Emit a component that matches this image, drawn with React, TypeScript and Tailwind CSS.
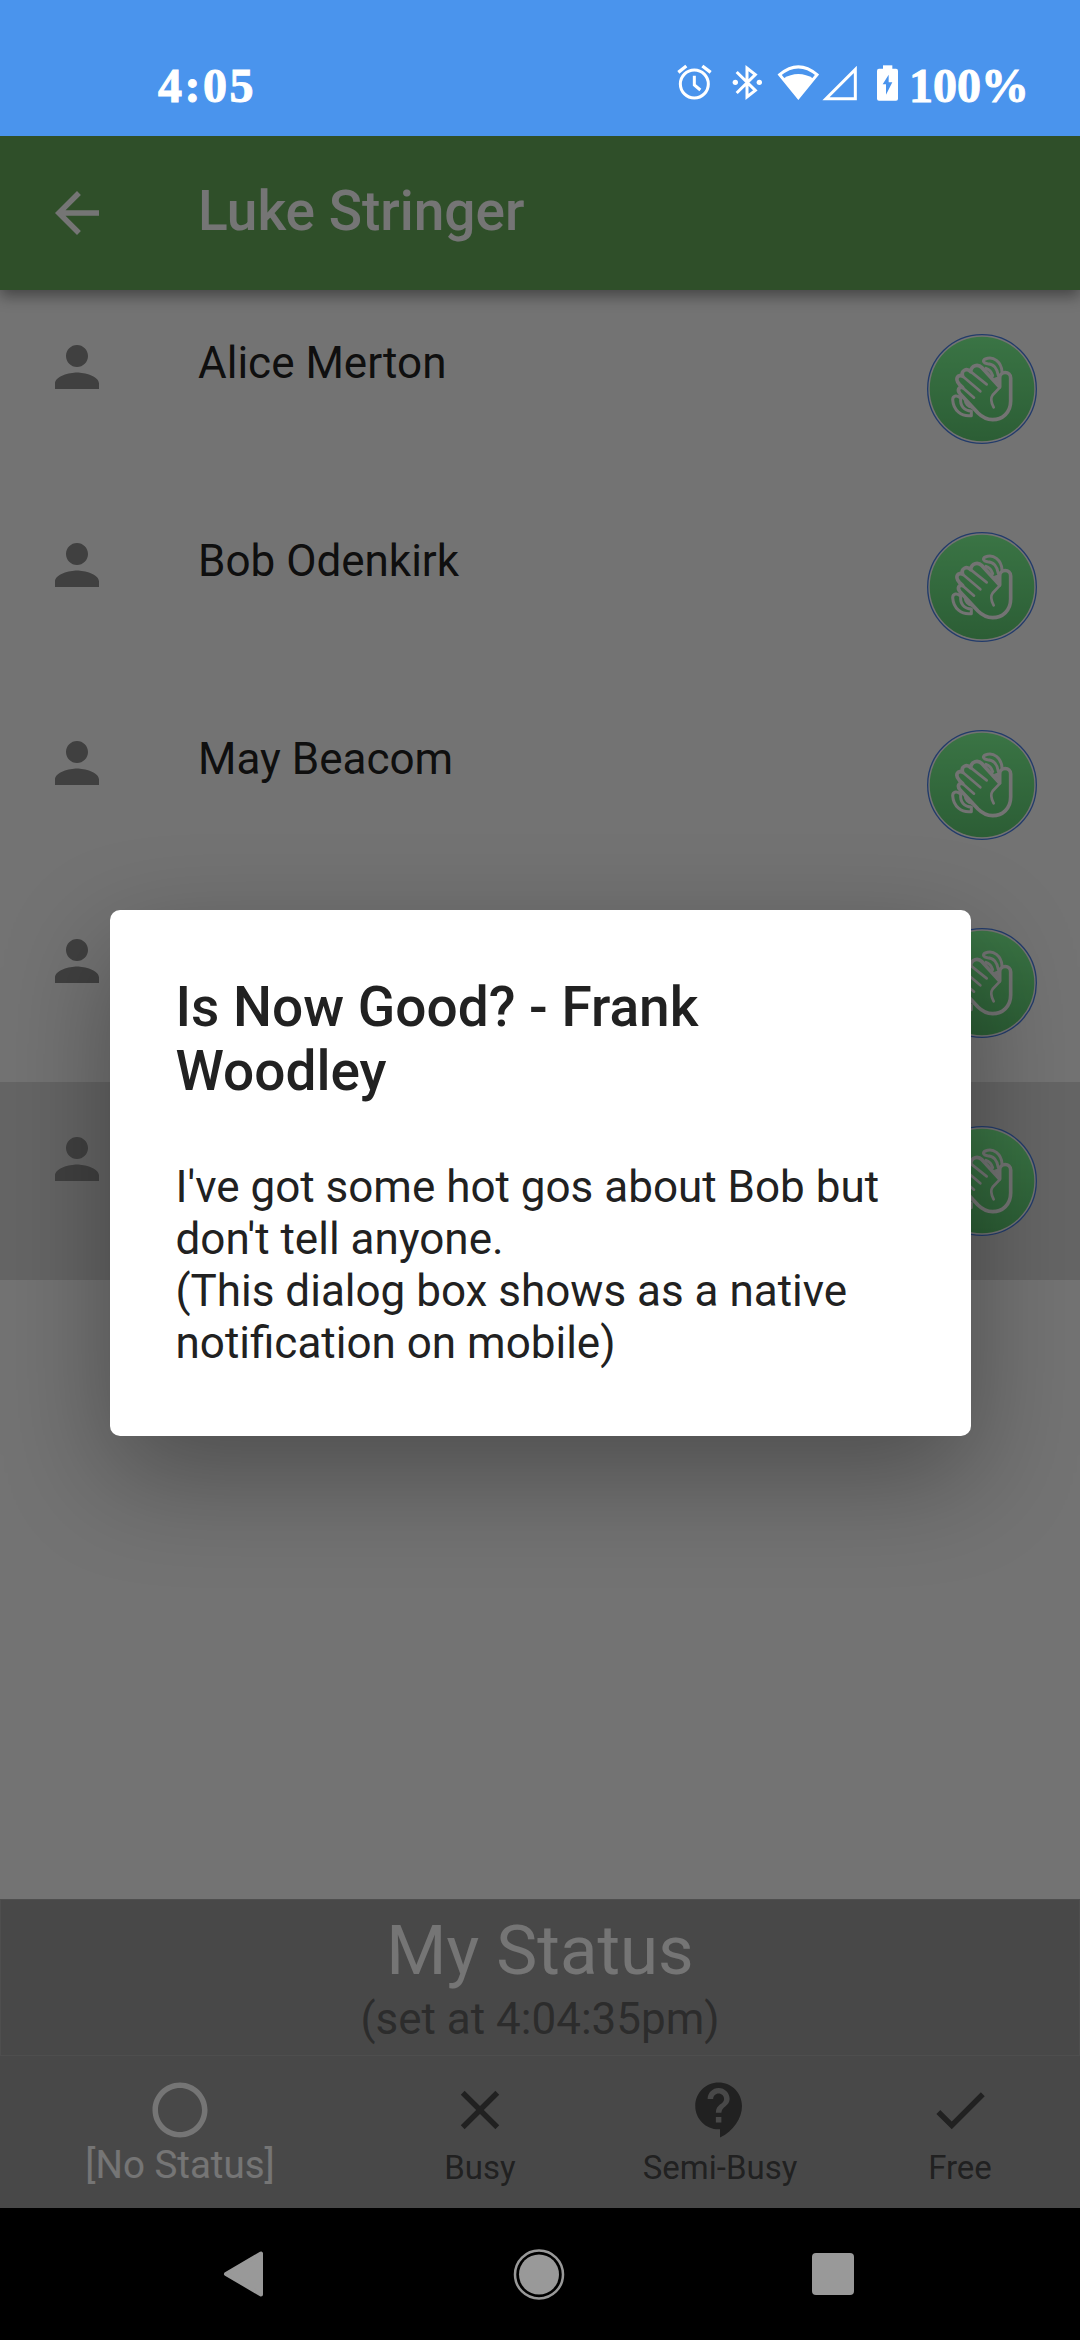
import {
  MdArrowBack, MdCheck, MdClear, MdContactSupport, MdPerson, MdRadioButtonUnchecked,
} from "react-icons/md";
import type { IconType } from "react-icons";

function StatusIcons() {
  return (
    <div className="mr-[10px] mt-[4px] flex items-start">
      <svg className="mr-[20px] h-[37px] w-[36px]" viewBox="108 72 108 111" fill="none" stroke="#fff">
        <circle cx="163" cy="132" r="42" strokeWidth="9" />
        <path d="M163 107V135L181 150" strokeWidth="9" />
        <path d="M115 97L139 78M187 78L212 97" strokeWidth="10" />
      </svg>
      <svg className="mr-[14px] h-[37px] w-[31px]" viewBox="276 72 93 111" fill="#fff">
        <path d="M290 96L346 151L321 171V84L346 104L290 159" fill="none" stroke="#fff" strokeWidth="9" />
        <circle cx="286" cy="127" r="8" />
        <circle cx="358" cy="127" r="8" />
      </svg>
      <svg className="mr-[2px] h-[37px] w-[43px]" viewBox="412 72 129 111" fill="none">
        <path d="M420 104Q476 57 532 104L476 173Z" stroke="#fff" strokeWidth="9" />
        <path d="M430 116Q476 88 522 116L476 178Z" fill="#fff" />
      </svg>
      <svg className="mr-[17px] h-[37px] w-[37px]" viewBox="546 72 111 111" fill="none">
        <path d="M558 176H646V88Z" stroke="#fff" strokeWidth="9" />
      </svg>
      <svg className="h-[38px] w-[23px]" viewBox="708 72 69 114" fill="#fff">
        <rect x="711" y="86" width="63" height="96" rx="6" />
        <rect x="729" y="76" width="28" height="14" />
        <path d="M746 104L728 133H738V164L757 127H746Z" fill="#4a94ed" />
      </svg>
    </div>
  );
}

function WaveButton() {
  return (
    <svg className="h-[112px] w-[112px] shrink-0" viewBox="78 68 336 336" fill="none">
      <defs>
        <linearGradient id="wave" x1="0" y1="0" x2="0" y2="1">
          <stop offset="0" stopColor="#7ffd96" />
          <stop offset="1" stopColor="#60cc74" />
        </linearGradient>
      </defs>
      <circle cx="246" cy="236" r="163" stroke="#4a80e8" strokeWidth="4" fill="#fafafa" />
      <circle cx="246" cy="236" r="157" fill="url(#wave)" />
      <g stroke="#fafafa" strokeWidth="11" strokeLinecap="round" strokeLinejoin="round">
        <path d="M299 230V203a16 16 0 0 1 33 0V272C332 308 306 328 278 328C256 328 244 318 234 308L180 250C170 238 178 228 188 232L178 222C162 204 176 190 188 198C182 180 200 172 212 184C214 164 234 160 246 172L299 230" />
        <path d="M188 232L222 262M188 198L241 243M212 184L260 222" strokeWidth="8" />
        <path d="M299 232L278 254C272 262 273 276 281 291" strokeWidth="8" />
        <path d="M262 160C250 158 246 150 256 146C280 136 304 154 306 184M262 160C280 160 292 174 295 196M258 174C267 177 275 186 278 196" strokeWidth="9" />
        <path d="M284 204L298 222V200Z" fill="#fafafa" strokeWidth="4" />
        <path d="M182 264C172 252 158 256 158 268C160 300 184 320 214 316V302C192 302 180 286 182 264M196 270C196 280 204 289 216 291" strokeWidth="9" />
      </g>
    </svg>
  );
}

const people = ["Alice Merton", "Bob Odenkirk", "May Beacom", "", ""];

function PersonRow({ name, selected }: { name: string; selected: boolean }) {
  return (
    <div className={`flex h-[198px] items-start pl-[44px] pr-[42px] pt-[43px] ${selected ? "bg-[#dcdcdc]" : ""}`}>
      <MdPerson className="mt-[1px] h-[66px] w-[66px] text-[#8b8b8b]" />
      <span className="ml-[88px] mt-[4px] flex-1 text-[44px] leading-[52px] text-[#212121]">{name}</span>
      <WaveButton />
    </div>
  );
}

function Tab({ icon: Icon, label, active = false }: { icon: IconType; label: string; active?: boolean }) {
  return (
    <div className={`flex flex-col items-center pt-[21px] ${active ? "flex-[1.5] text-white" : "flex-1 text-[#494949]"}`}>
      <Icon className="h-[66px] w-[66px]" />
      <span className={active ? "text-[38.5px] leading-[44px]" : "mt-[5px] text-[33px] leading-[40px]"}>{label}</span>
    </div>
  );
}

export default function App() {
  return (
    <div className="flex h-[2340px] w-[1080px] flex-col overflow-hidden bg-black font-[Roboto,sans-serif]">
      <header className="relative z-10 flex h-[136px] items-start bg-[#4a94ed] pl-[158px] pr-[51px] pt-[60px] text-white">
        <span className="flex-1 font-['Liberation_Serif',serif] text-[48px] font-bold leading-[52px] tracking-[2.5px] [-webkit-text-stroke:1px_white]">4:05</span>
        <StatusIcons />
        <span className="font-['Liberation_Serif',serif] text-[48px] font-bold leading-[52px] [-webkit-text-stroke:1px_white]">100%</span>
      </header>

      <main className="relative flex h-[2072px] flex-col overflow-hidden bg-[#fafafa]">
        <div className="z-10 flex h-[154px] shrink-0 items-center bg-[#66ac5b] px-[44px] text-white shadow-[0_6px_14px_rgba(0,0,0,0.4)]">
          <MdArrowBack className="h-[66px] w-[66px]" />
          <h1 className="mb-[5px] ml-[88px] text-[55px] font-medium leading-[64px]">Luke Stringer</h1>
        </div>

        <div className="flex-1">
          {people.map((name, i) => (
            <PersonRow key={i} name={name} selected={i === 4} />
          ))}
        </div>

        <div className="flex h-[157px] flex-col items-center border border-[#aaaaaa] bg-[#9e9e9e] pt-[11px]">
          <span className="text-[69px] leading-[80px] text-white">My Status</span>
          <span className="mt-[2px] text-[44px] leading-[52px] text-[#616161]">(set at 4:04:35pm)</span>
        </div>
        <nav className="flex h-[152px] bg-[#9e9e9e]">
          <Tab icon={MdRadioButtonUnchecked} label="[No Status]" active />
          <Tab icon={MdClear} label="Busy" />
          <Tab icon={MdContactSupport} label="Semi-Busy" />
          <Tab icon={MdCheck} label="Free" />
        </nav>

        <div className="absolute inset-0 z-20 flex items-start justify-center bg-black/54">
          <section className="mt-[774px] h-[526px] w-[861px] rounded-[10px] bg-white px-[66px] pt-[65px] text-[#212121] shadow-[0_38px_110px_rgba(0,0,0,0.33)]">
            <h2 className="text-[55px] font-medium leading-[64px]">Is Now Good? - Frank Woodley</h2>
            <p className="mt-[58px] text-[44px] leading-[52px]">
              I've got some hot gos about Bob but don't tell anyone.
              <br />
              (This dialog box shows as a native notification on mobile)
            </p>
          </section>
        </div>
      </main>

      <footer className="flex h-[132px] items-center pl-[222px] pr-[226px]">
        <div className="flex flex-1 items-center justify-between">
          <svg className="h-[50px] w-[42px]" viewBox="0 0 42 50" fill="#999" stroke="#999" strokeWidth="4" strokeLinejoin="round">
            <path d="M4 25L39 4.500V45.500z" />
          </svg>
          <svg className="ml-[1px] h-[52px] w-[52px]" viewBox="0 0 52 52" fill="none">
            <circle cx="26" cy="26.500" r="20" fill="#999" />
            <circle cx="26" cy="26.500" r="24" stroke="#999" strokeWidth="2.500" />
          </svg>
          <div className="h-[42px] w-[42px] rounded-[4px] bg-[#999]" />
        </div>
      </footer>
    </div>
  );
}
